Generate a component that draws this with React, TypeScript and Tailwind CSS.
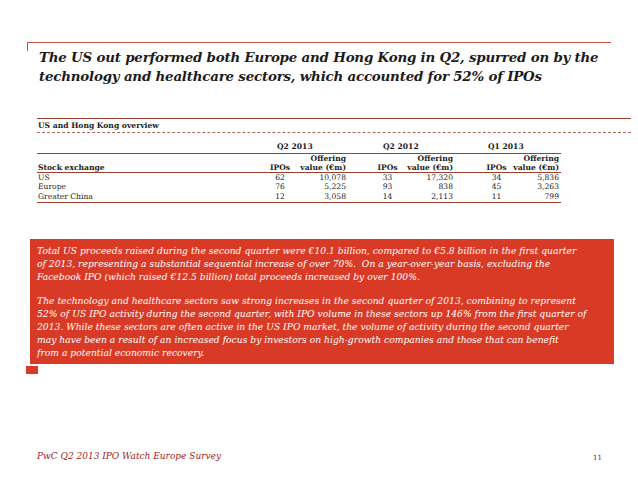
const serif = "font-['DejaVu_Serif','Liberation_Serif',serif]";

const COLS = [
  "w-[231px] text-left pl-[1px]",
  "w-[24px] text-center",
  "w-[56px] text-right pr-[2px]",
  "w-[27px]",
  "w-[25px] text-center",
  "w-[55px] text-right pr-[2px]",
  "w-[29px]",
  "w-[25px] text-center",
  "w-[52px] text-right pr-[2px]",
];

const ROWS = [
  ["US", "62", "10,078", "", "33", "17,320", "", "34", "5,836"],
  ["Europe", "76", "5,225", "", "93", "838", "", "45", "3,263"],
  ["Greater China", "12", "3,058", "", "14", "2,113", "", "11", "799"],
];

const PARA1 = [
  "Total US proceeds raised during the second quarter were €10.1 billion, compared to €5.8 billion in the first quarter",
  "of 2013, representing a substantial sequential increase of over 70%.  On a year-over-year basis, excluding the",
  "Facebook IPO (which raised €12.5 billion) total proceeds increased by over 100%.",
];

const PARA2 = [
  "The technology and healthcare sectors saw strong increases in the second quarter of 2013, combining to represent",
  "52% of US IPO activity during the second quarter, with IPO volume in these sectors up 146% from the first quarter of",
  "2013. While these sectors are often active in the US IPO market, the volume of activity during the second quarter",
  "may have been a result of an increased focus by investors on high-growth companies and those that can benefit",
  "from a potential economic recovery.",
];

function Row({ cells, className }: { cells: string[]; className?: string }) {
  return (
    <div className={`flex ${className ?? ""}`}>
      {cells.map((c, i) => (
        <div key={i} className={`${COLS[i]} whitespace-nowrap`}>
          {c}
        </div>
      ))}
    </div>
  );
}

export default function App() {
  return (
    <div className={`w-[638px] h-[479px] bg-white flex flex-col text-[#1c1c1c] ${serif}`}>
      {/* Title */}
      <div className="ml-[27px] mt-[42px] w-[584px] border-t border-[#c2553f]">
        <div className="h-[8px] border-l border-[#c2553f]" />
        <h1 className="-mt-[3px] ml-[12px] text-[13.4px] leading-[19px] font-bold italic tracking-[-0.2px]">
          <div className="whitespace-nowrap">The US out performed both Europe and Hong Kong in Q2, spurred on by the</div>
          <div className="whitespace-nowrap">technology and healthcare sectors, which accounted for 52% of IPOs</div>
        </h1>
      </div>

      {/* Table */}
      <div className="ml-[37px] mt-[32px] text-[7.6px] leading-[9.3px]">
        <div className="w-[594px] border-t-[1.5px] border-[#9d3f2c] pt-[2px] pb-[2px] pl-[1px] font-bold">
          <span className="whitespace-nowrap">US and Hong Kong overview</span>
        </div>
        <div className="w-[594px] border-t border-dashed border-[#b06a5a]" />
        <div className="w-[524px] mt-[9px]">
          <div className="flex font-bold border-b-[1.5px] border-[#9d3f2c] pb-[1px]">
            <div className="w-[231px]" />
            <div className="w-[80px] pl-[9px] whitespace-nowrap">Q2 2013</div>
            <div className="w-[27px]" />
            <div className="w-[80px] pl-[8px] whitespace-nowrap">Q2 2012</div>
            <div className="w-[29px]" />
            <div className="w-[77px] pl-[4px] whitespace-nowrap">Q1 2013</div>
          </div>
          <div className="font-bold border-b-[1.5px] border-[#9d3f2c]">
            <Row cells={["", "", "Offering", "", "", "Offering", "", "", "Offering"]} />
            <Row cells={["Stock exchange", "IPOs", "value (€m)", "", "IPOs", "value (€m)", "", "IPOs", "value (€m)"]} />
          </div>
          <div className="border-b-[1.5px] border-[#9d3f2c] pb-[1px]">
            {ROWS.map((r) => (
              <Row key={r[0]} cells={r} />
            ))}
          </div>
        </div>
      </div>

      {/* Commentary box */}
      <div className="ml-[30px] mt-[36px] w-[584px] bg-[#d93a25] text-white italic text-[9.2px] leading-[13px] pl-[7px] pt-[5px] pb-[5px]">
        {PARA1.map((l) => (
          <div key={l} className="whitespace-pre">{l}</div>
        ))}
        <div className="h-[11px]" />
        {PARA2.map((l) => (
          <div key={l} className="whitespace-pre">{l}</div>
        ))}
      </div>
      <div className="ml-[26px] mt-[2px] w-[12px] h-[8px] bg-[#d93a25]" />

      {/* Footer */}
      <div className="mt-auto mb-[16px] ml-[37px] mr-[36px] flex items-end justify-between">
        <span className="text-[9px] italic text-[#a31d22] whitespace-nowrap">PwC Q2 2013 IPO Watch Europe Survey</span>
        <span className="text-[7px] text-[#333]">11</span>
      </div>
    </div>
  );
}
